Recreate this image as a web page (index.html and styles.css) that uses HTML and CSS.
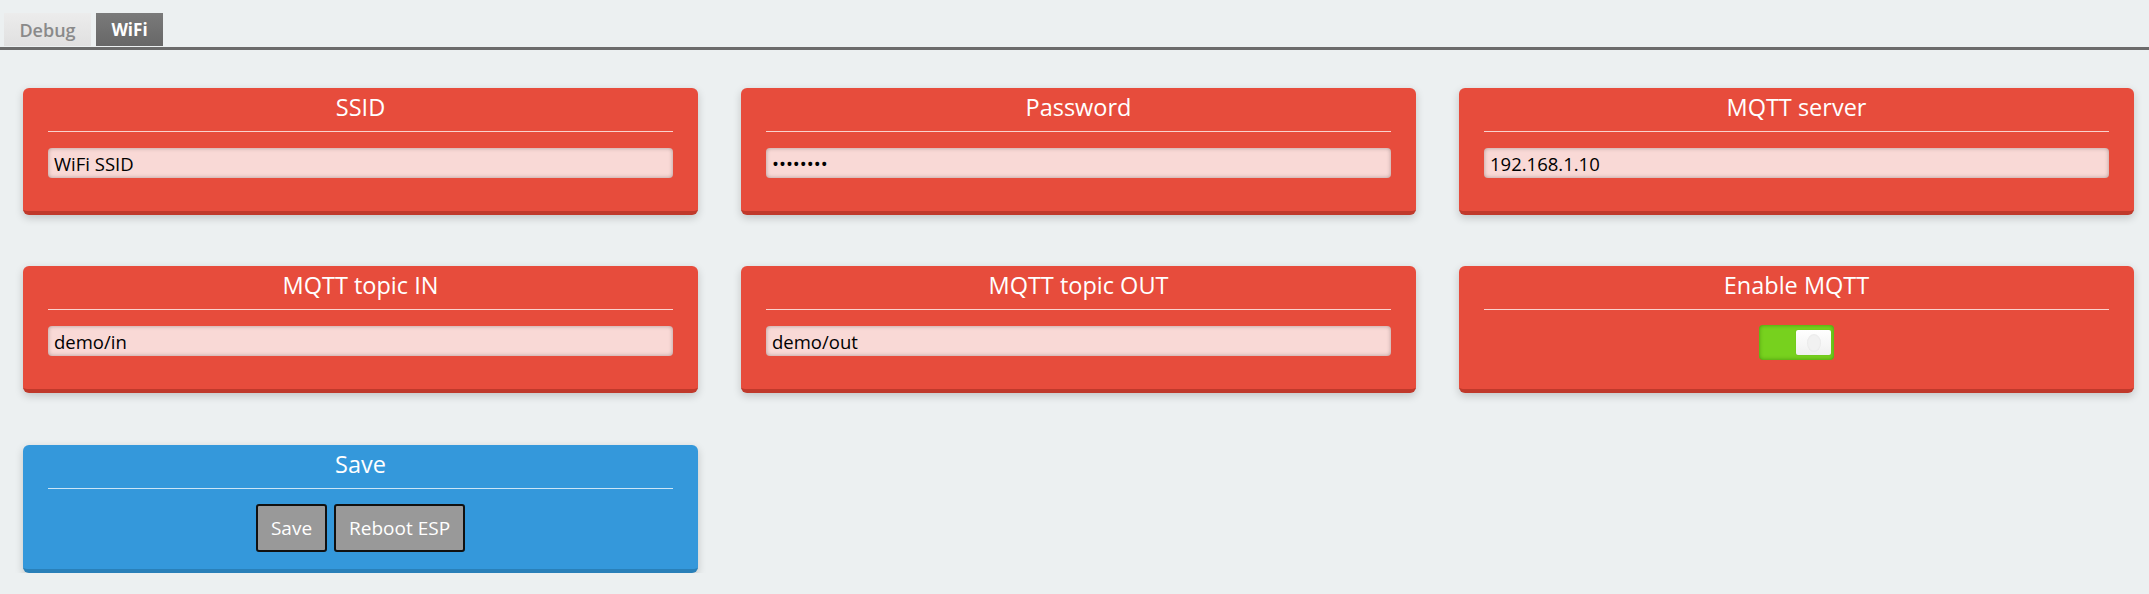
FILE: index.html
```html
<!DOCTYPE html>
<html>
<head>
<meta charset="utf-8">
<title>ESPUI</title>
<link rel="stylesheet" href="styles.css">
</head>
<body>
<nav class="tabs">
  <a class="tab">Debug</a>
  <a class="tab active">WiFi</a>
</nav>
<main class="grid">
  <section class="card red">
    <h5 class="title">SSID</h5>
    <hr class="rule">
    <input class="field" type="text" value="WiFi SSID">
  </section>
  <section class="card red">
    <h5 class="title">Password</h5>
    <hr class="rule">
    <input class="field" type="password" value="password">
  </section>
  <section class="card red">
    <h5 class="title">MQTT server</h5>
    <hr class="rule">
    <input class="field" type="text" value="192.168.1.10">
  </section>
  <section class="card red">
    <h5 class="title">MQTT topic IN</h5>
    <hr class="rule">
    <input class="field" type="text" value="demo/in">
  </section>
  <section class="card red">
    <h5 class="title">MQTT topic OUT</h5>
    <hr class="rule">
    <input class="field" type="text" value="demo/out">
  </section>
  <section class="card red">
    <h5 class="title">Enable MQTT</h5>
    <hr class="rule">
    <div class="center">
      <div class="switch"><span class="knob"><span class="dot"></span></span></div>
    </div>
  </section>
  <section class="card blue tall">
    <h5 class="title">Save</h5>
    <hr class="rule">
    <div class="center buttons">
      <button class="btn">Save</button>
      <button class="btn">Reboot ESP</button>
    </div>
  </section>
</main>
</body>
</html>
```
FILE: styles.css
```css
html, body {
  margin: 0;
  padding: 0;
  background: #ecf0f1;
  font-family: "Open Sans", "Noto Sans", sans-serif;
}

.tabs {
  display: flex;
  gap: 5px;
  padding: 13px 0 0 4px;
  border-bottom: 3px solid #6b6b6b;
}

.tab {
  display: flex;
  align-items: center;
  justify-content: center;
  height: 33px;
  margin-bottom: 1px;
  font-size: 18px;
  font-weight: 600;
  color: #8a8a8a;
  background: linear-gradient(#ececec, #e0e0e0);
  width: 87px;
  box-sizing: border-box;
}
.tab.active {
  width: 67px;
  color: #fff;
  font-weight: 700;
  font-size: 17px;
  background: linear-gradient(#7a7a7a, #676767);
}

.grid {
  display: grid;
  grid-template-columns: repeat(3, 675px);
  column-gap: 43px;
  row-gap: 51px;
  padding: 38px 0 0 23px;
}

.card {
  box-sizing: border-box;
  height: 127px;
  padding: 0 25px;
  border-radius: 6px;
  color: #fff;
  box-shadow: 0 3px 8px rgba(0, 0, 0, 0.18);
}
.card.red { background: #e74c3c; border-bottom: 4px solid #c0392b; }
.card.blue { background: #3498db; border-bottom: 4px solid #2980b9; }
.card.tall { height: 128px; margin-top: 1px; }

.title {
  margin: 0;
  height: 43px;
  line-height: 38px;
  text-align: center;
  font-size: 23.5px;
  font-weight: 400;
}

.rule {
  margin: 0;
  border: 0;
  height: 1px;
  background: rgba(255, 255, 255, 0.75);
}

.field {
  display: block;
  box-sizing: border-box;
  width: 100%;
  height: 30px;
  margin-top: 16px;
  padding: 0 6px;
  border: 0;
  border-radius: 4px;
  background: #f9d9d6;
  box-shadow: inset 0 0 4px rgba(0, 0, 0, 0.3);
  font-family: "Open Sans", "Noto Sans", sans-serif;
  font-size: 18.5px;
  color: #000;
  outline: none;
}

.center {
  display: flex;
  justify-content: center;
  margin-top: 15px;
}

.switch {
  box-sizing: border-box;
  width: 75px;
  height: 35px;
  padding: 5px 3px;
  display: flex;
  justify-content: flex-end;
  background: #77d11e;
  border-radius: 4px;
  box-shadow: inset 0 0 4px rgba(40, 110, 0, 0.6);
}
.knob {
  width: 35px;
  height: 25px;
  border-radius: 2px;
  background: linear-gradient(#ffffff, #f0f0f0);
  box-shadow: 0 0 1px rgba(0, 0, 0, 0.3);
  display: flex;
  align-items: center;
  justify-content: center;
}
.dot {
  width: 14px;
  height: 18px;
  border-radius: 50%;
  background: #f1f1f1;
  box-shadow: inset 0 0 2px rgba(0, 0, 0, 0.08);
}

.buttons { gap: 7px; }
.btn {
  box-sizing: border-box;
  height: 48px;
  padding: 0 13px;
  border: 2px solid #111;
  border-radius: 3px;
  background: #999;
  color: #fff;
  font-family: "Open Sans", "Noto Sans", sans-serif;
  font-size: 19px;
}
```
